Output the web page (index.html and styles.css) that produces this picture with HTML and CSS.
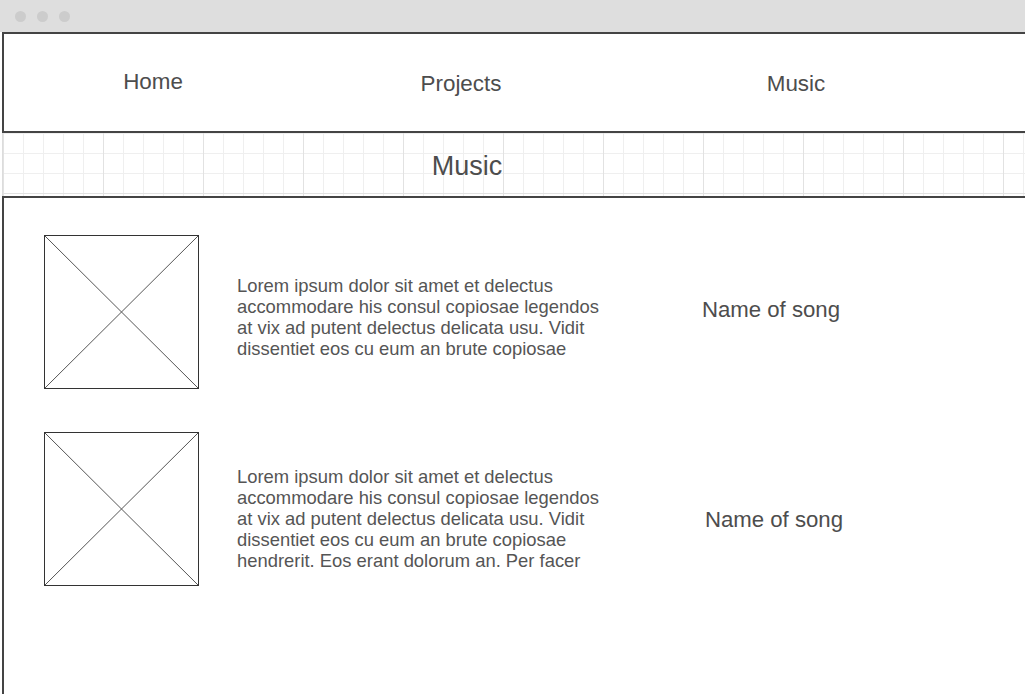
FILE: index.html
```html
<!DOCTYPE html>
<html lang="en">
<head>
    <meta charset="UTF-8">
    <meta name="viewport" content="width=device-width, initial-scale=1.0">
    <title>Music</title>
    <link rel="stylesheet" href="styles.css">
</head>
<body>
    <div class="titlebar">
        <span class="dot"></span>
        <span class="dot"></span>
        <span class="dot"></span>
    </div>
    <div class="page">
        <nav class="nav">
            <a class="nav-item nav-home" href="#">Home</a>
            <a class="nav-item" href="#">Projects</a>
            <a class="nav-item" href="#">Music</a>
        </nav>

        <div class="banner">
            <h1 class="banner-title">Music</h1>
        </div>

        <div class="content">
            <div class="song">
                <div class="cover">
                    <svg viewBox="0 0 100 100" preserveAspectRatio="none">
                        <line x1="0" y1="0" x2="100" y2="100" />
                        <line x1="100" y1="0" x2="0" y2="100" />
                    </svg>
                </div>
                <p class="song-text">Lorem ipsum dolor sit amet et delectus accommodare his consul copiosae legendos at vix ad putent delectus delicata usu. Vidit dissentiet eos cu eum an brute copiosae</p>
                <div class="song-name">Name of song</div>
            </div>

            <div class="song song-low">
                <div class="cover">
                    <svg viewBox="0 0 100 100" preserveAspectRatio="none">
                        <line x1="0" y1="0" x2="100" y2="100" />
                        <line x1="100" y1="0" x2="0" y2="100" />
                    </svg>
                </div>
                <p class="song-text">Lorem ipsum dolor sit amet et delectus accommodare his consul copiosae legendos at vix ad putent delectus delicata usu. Vidit dissentiet eos cu eum an brute copiosae hendrerit. Eos erant dolorum an. Per facer</p>
                <div class="song-name">Name of song</div>
            </div>
        </div>
    </div>
</body>
</html>
```

FILE: styles.css
```css
html, body {
    height: 100%;
}
body {
    margin: 0;
    font-family: "Liberation Sans", Arial, sans-serif;
    color: #4d4d4d;
    background-color: #ffffff;
    display: flex;
    flex-direction: column;
    overflow: hidden;
}
.titlebar {
    height: 32px;
    background-color: #dedede;
    display: flex;
    align-items: center;
    gap: 11px;
    padding-left: 15px;
    box-sizing: border-box;
}
.dot {
    width: 11px;
    height: 11px;
    border-radius: 50%;
    background-color: #cccccc;
}
.page {
    flex: 1;
    display: flex;
    flex-direction: column;
    margin-left: 2px;
}
.nav {
    height: 97px;
    border-top: 2px solid #444444;
    border-left: 2px solid #444444;
    border-bottom: 2px solid #444444;
    display: grid;
    grid-template-columns: 298px 318px 352px;
    align-items: center;
}
.nav-item {
    text-align: center;
    font-size: 22.4px;
    color: #4d4d4d;
    text-decoration: none;
    padding-top: 2px;
}
.nav-home {
    padding-top: 0;
    margin-top: -2px;
}
.banner {
    height: 63px;
    border-left: 1px solid #dcdcdc;
    background-color: #ffffff;
    background-image:
        linear-gradient(to right, #e2e2e2 1px, transparent 1px),
        linear-gradient(to bottom, #e2e2e2 1px, transparent 1px),
        linear-gradient(to right, #efefef 1px, transparent 1px),
        linear-gradient(to bottom, #efefef 1px, transparent 1px);
    background-size: 100px 100px, 100px 100px, 20px 20px, 20px 20px;
    background-position: 0 -40px, 0 -40px, 0 0, 0 0;
    display: flex;
    align-items: center;
}
.banner-title {
    margin: 0;
    width: 928px;
    text-align: center;
    font-size: 27px;
    font-weight: normal;
    color: #4d4d4d;
    padding-top: 4px;
}
.content {
    flex: 1;
    border-top: 2px solid #444444;
    border-left: 2px solid #444444;
    padding: 37px 0 0 40px;
    display: flex;
    flex-direction: column;
    gap: 43px;
}
.song {
    display: grid;
    grid-template-columns: 155px 372px 248px;
    column-gap: 38px;
    align-items: center;
}
.cover {
    width: 155px;
    height: 154px;
    box-sizing: border-box;
    border: 1px solid #333333;
}
.cover svg {
    display: block;
    width: 100%;
    height: 100%;
}
.cover line {
    stroke: #555555;
    stroke-width: 1;
    vector-effect: non-scaling-stroke;
}
.song-text {
    margin: 9px 0 0;
    font-size: 18.4px;
    line-height: 21px;
    color: #555555;
}
.song-name {
    font-size: 22.2px;
    color: #4d4d4d;
    text-align: center;
    margin-bottom: 4px;
}
.song-low .song-text {
    margin-top: 18px;
}
.song-low .song-name {
    margin-top: 22px;
    margin-bottom: 0;
    padding-left: 6px;
}
```
